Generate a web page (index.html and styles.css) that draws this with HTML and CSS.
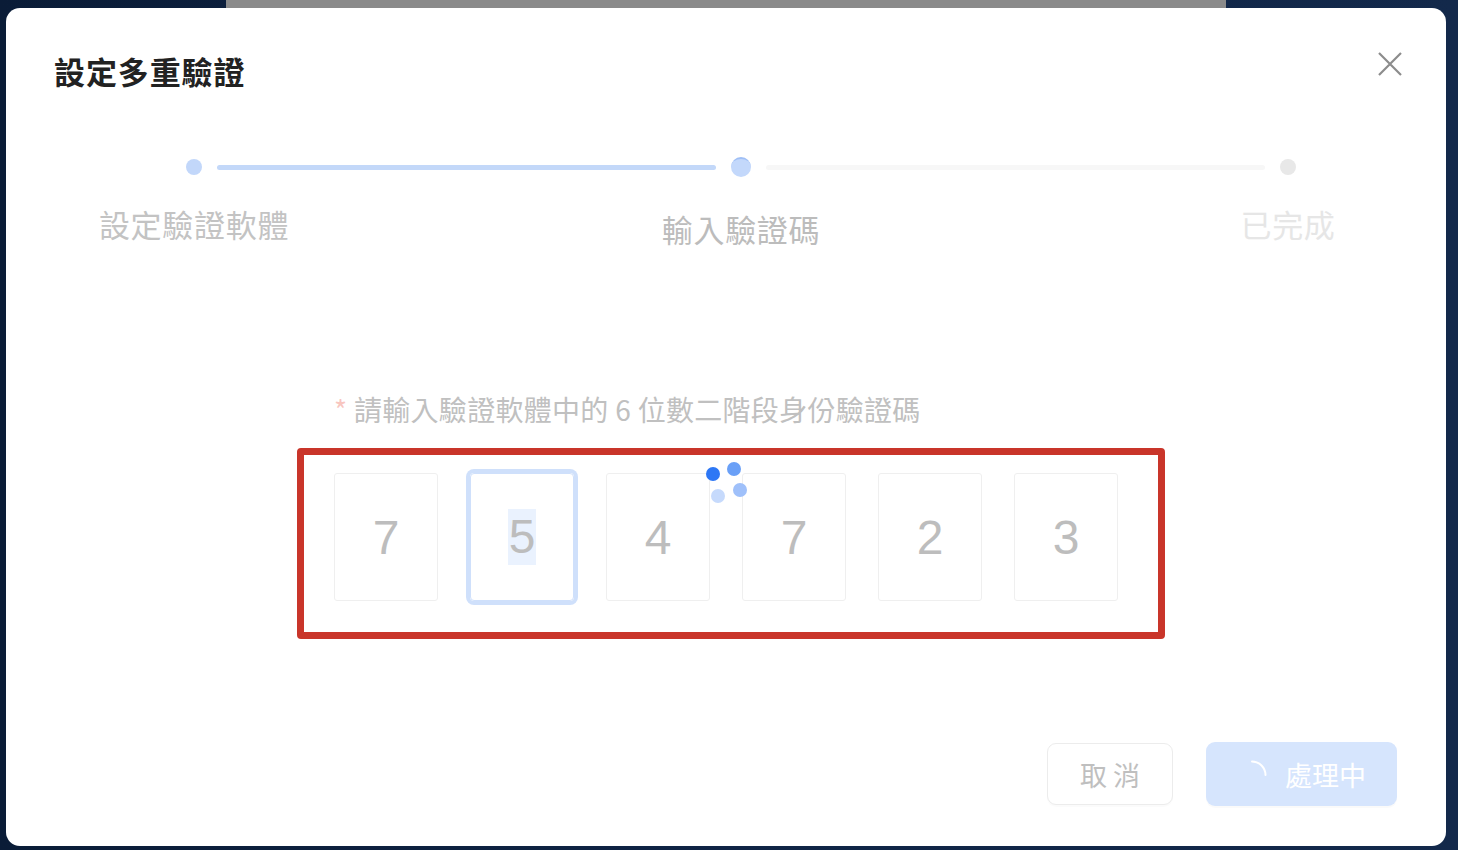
FILE: index.html
```html
<!DOCTYPE html>
<html lang="zh-Hant">
<head>
<meta charset="utf-8">
<title>設定多重驗證</title>
<link rel="stylesheet" href="styles.css">
</head>
<body>
<div class="backdrop-strip"></div>
<div class="modal">
  <button class="close" aria-label="close">
    <svg width="24" height="24" viewBox="0 0 24 24"><path d="M1 1 L23 23 M23 1 L1 23" stroke="#8c8c8c" stroke-width="2.2" fill="none"/></svg>
  </button>
  <h1 class="title">設定多重驗證</h1>

  <div class="steps">
    <div class="dot dot-done"></div>
    <div class="line line-done"></div>
    <div class="dot dot-current"></div>
    <div class="line line-todo"></div>
    <div class="dot dot-todo"></div>

    <div class="label-cell"><span class="label label-done">設定驗證軟體</span></div>
    <div></div>
    <div class="label-cell"><span class="label label-current">輸入驗證碼</span></div>
    <div></div>
    <div class="label-cell"><span class="label label-todo">已完成</span></div>
  </div>

  <div class="form">
    <div class="hint"><span class="req">*</span> 請輸入驗證軟體中的 6 位數二階段身份驗證碼</div>
    <div class="code-frame">
      <div class="code-row">
        <div class="cell">7</div>
        <div class="cell focused"><span class="sel">5</span></div>
        <div class="cell">4</div>
        <div class="cell">7</div>
        <div class="cell">2</div>
        <div class="cell">3</div>
      </div>
      <div class="spin">
        <i class="sd sd1"></i><i class="sd sd2"></i><i class="sd sd3"></i><i class="sd sd4"></i>
      </div>
    </div>
  </div>

  <div class="footer">
    <button class="btn btn-cancel">取 消</button>
    <button class="btn btn-primary">
      <svg class="arc" width="30" height="30" viewBox="0 0 30 30"><path d="M15 1.5 A13.5 13.5 0 0 1 28.5 15" stroke="#ffffff" stroke-width="2" fill="none" stroke-linecap="round"/></svg>
      <span>處理中</span>
    </button>
  </div>
</div>
</body>
</html>
```

FILE: styles.css
```css
* { box-sizing: border-box; }

html, body {
  margin: 0;
  padding: 0;
  width: 1458px;
  height: 850px;
  overflow: hidden;
}

body {
  background: linear-gradient(to right, #0a1c37 0%, #0f2445 50%, #13294b 100%);
  font-family: "Noto Sans CJK TC", "Noto Sans", sans-serif;
}

.backdrop-strip {
  width: 1000px;
  height: 8px;
  margin-left: 226px;
  background: #8a8a8a;
}

.modal {
  position: relative;
  width: 1440px;
  height: 838px;
  margin-left: 6px;
  background: #ffffff;
  border-radius: 14px;
  display: flex;
  flex-direction: column;
}

.close {
  position: absolute;
  top: 44px;
  right: 44px;
  width: 24px;
  height: 24px;
  padding: 0;
  border: 0;
  background: none;
  display: flex;
}

.title {
  margin: 0;
  padding: 43px 0 0 48px;
  font-size: 31px;
  line-height: 40px;
  font-weight: 700;
  color: #222222;
  letter-spacing: 0.9px;
}

.steps {
  margin: 66px 0 0 180px;
  width: 1110px;
  display: grid;
  grid-template-columns: 16px 1fr 20px 1fr 16px;
  column-gap: 15px;
  align-items: center;
}

.dot {
  border-radius: 50%;
  justify-self: center;
}
.dot-done { width: 16px; height: 16px; background: #c2d7fa; }
.dot-current {
  width: 20px; height: 20px;
  background: #c3d8fb;
  border-top: 2px solid #9fbff6;
}
.dot-todo { width: 16px; height: 16px; background: #e8e8e8; }

.line { height: 5px; border-radius: 3px; }
.line-done { background: #c3d8f9; }
.line-todo { background: #f7f7f7; }

.label-cell {
  display: flex;
  justify-content: center;
  align-self: start;
  margin-top: 27px;
}
.label {
  white-space: nowrap;
  font-size: 31px;
  line-height: 40px;
  letter-spacing: 0.7px;
}
.label-done { color: #c3c3c3; }
.label-current { color: #bcbcbc; padding-top: 5px; }
.label-todo { color: #e6e6e6; }

.form {
  margin: 140px 0 0 291px;
  width: 868px;
}

.hint {
  margin-left: 37px;
  font-size: 28px;
  line-height: 40px;
  color: #c0c0c0;
  white-space: nowrap;
  letter-spacing: 0.3px;
}
.req { color: #f8c6c0; }

.code-frame {
  position: relative;
  margin-top: 19px;
  height: 191px;
  border: 7px solid #c9352a;
  border-radius: 4px;
  padding: 18px 0 0 30px;
}

.code-row {
  display: flex;
  gap: 32px;
}

.cell {
  width: 104px;
  height: 128px;
  border: 1.5px solid #efefef;
  border-radius: 3px;
  display: flex;
  align-items: center;
  justify-content: center;
  font-family: "Liberation Sans", Arial, sans-serif;
  font-size: 48px;
  color: #bdbdbd;
}
.cell.focused {
  border: 1px solid #cfe0fb;
  box-shadow: 0 0 0 4px #cfe0fb;
  border-radius: 4px;
}
.sel {
  background: #eaf2fe;
  line-height: 56px;
  padding: 0 1px;
}

.spin {
  position: absolute;
  left: 402px;
  top: 7px;
  width: 42px;
  height: 42px;
}
.sd {
  position: absolute;
  width: 14px;
  height: 14px;
  border-radius: 50%;
}
.sd1 { left: 0; top: 5px; background: #2d77f5; }
.sd2 { left: 21px; top: 0; background: #6aa0f7; }
.sd3 { left: 27px; top: 21px; background: #9fc0fa; }
.sd4 { left: 5px; top: 27px; background: #c6dafc; }

.footer {
  margin-top: auto;
  padding: 0 49px 40px 0;
  display: flex;
  justify-content: flex-end;
  align-items: center;
  gap: 33px;
}

.btn {
  font-family: "Noto Sans CJK TC", "Noto Sans", sans-serif;
  font-size: 27px;
  border-radius: 9px;
  cursor: default;
}
.btn-cancel {
  width: 126px;
  height: 62px;
  background: #ffffff;
  border: 1.5px solid #ececec;
  color: #bfbfbf;
  box-shadow: 0 2px 0 rgba(0,0,0,0.015);
}
.btn-primary {
  width: 191px;
  height: 64px;
  background: #d6e5fd;
  border: 0;
  color: #ffffff;
  display: flex;
  align-items: center;
  justify-content: center;
  gap: 18px;
  padding: 0;
  box-shadow: 0 2px 0 rgba(0,0,0,0.02);
}
.arc { margin-top: 2px; }
```
